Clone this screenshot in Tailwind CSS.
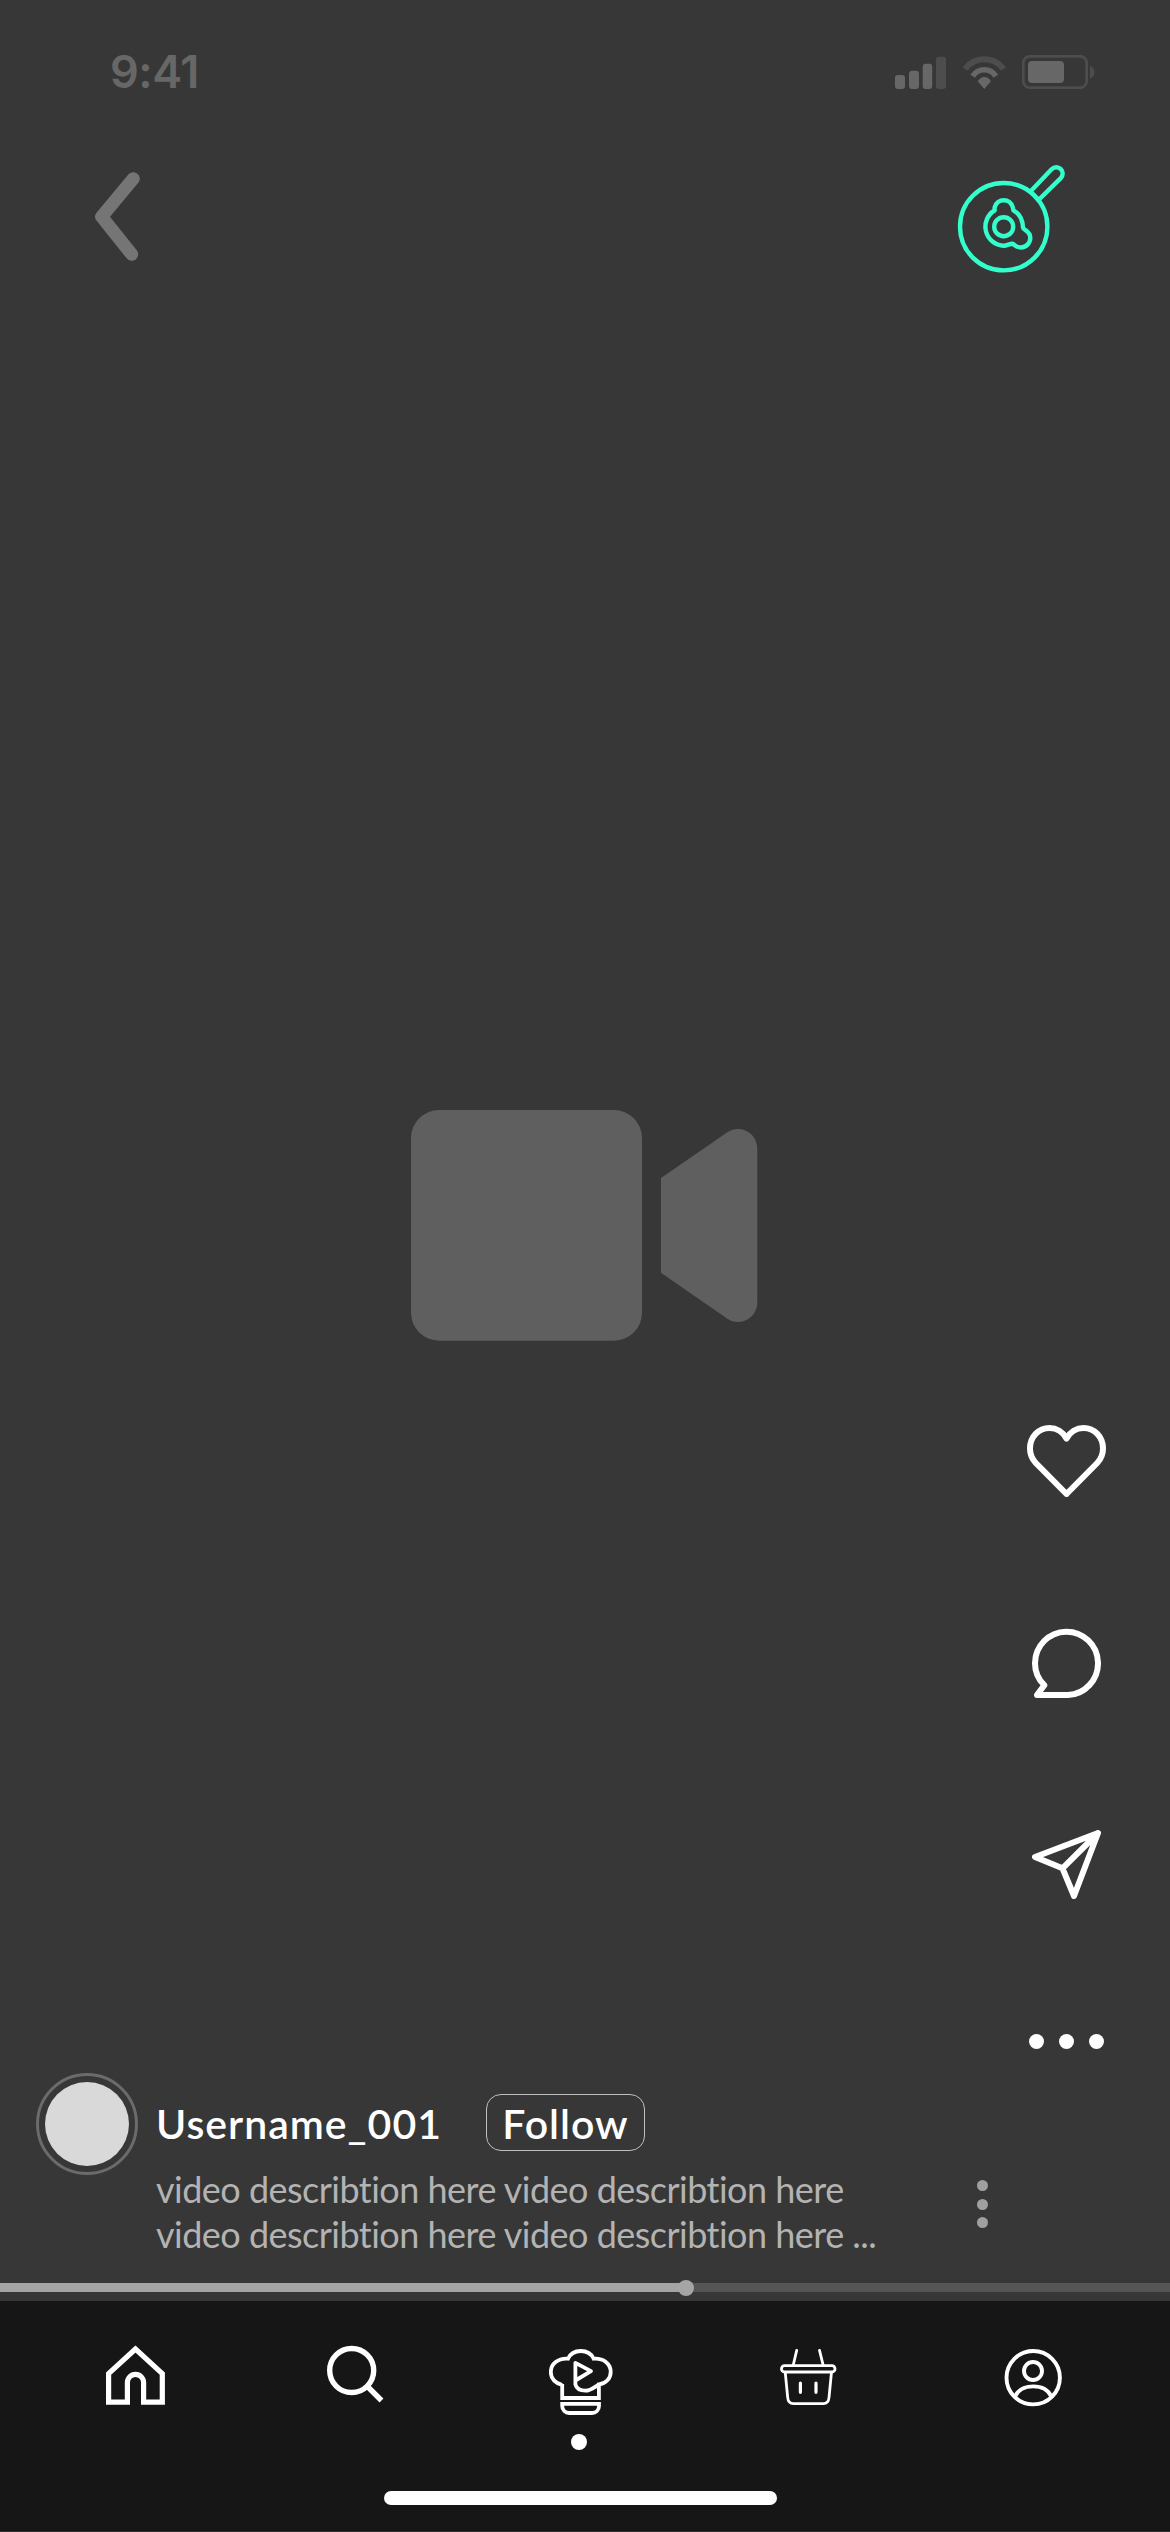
<!DOCTYPE html>
<html lang="en">

<head>
    <meta charset="UTF-8">
    <meta name="viewport" content="width=device-width, initial-scale=1.0">
    <script src="https://cdn.jsdelivr.net/npm/@tailwindcss/browser@4"></script>
    <title>Video</title>
</head>

<body class="bg-[#373737]">
    <div class="w-[1170px] h-[2532px] flex flex-col overflow-hidden bg-[#373737] font-['Lato',sans-serif] text-white">

        <!-- Status bar -->
        <div class="h-[145px] pt-[55px] pl-[110px] pr-[74px] flex justify-between items-start">
            <span class="h-[35px] leading-[34px] text-[45px] font-semibold font-['Inter',sans-serif] tracking-[-0.5px] text-[#676767]">9:41</span>
            <svg class="w-[201px] h-[35px]" viewBox="0 0 201 35" fill="none">
                <g fill="#676767">
                    <rect y="20" width="10" height="14" rx="3" />
                    <rect x="14" y="15.7" width="10" height="18.3" rx="3" />
                    <rect x="27.7" y="8.7" width="9.5" height="25.3" rx="3" />
                    <path d="M82.7 26.3C86 20.5 92.6 20.5 96 26.3L89.3 34z" />
                    <rect x="133" y="6" width="36" height="22" rx="4" />
                </g>
                <rect x="41" y="1.7" width="10" height="32.3" rx="3" fill="#4d4d4d" />
                <path d="M70 14A24 24 0 0 1 108.6 14" stroke="#4d4d4d" stroke-width="6" />
                <path d="M77.8 21.2A13.5 13.5 0 0 1 100.8 21.2" stroke="#676767" stroke-width="5.7" />
                <rect x="128.3" y="1.3" width="63.4" height="31.4" rx="6.5" stroke="#4d4d4d" stroke-width="2.7" />
                <path d="M195 11C201 13 201 21.5 195 23.5z" fill="#4d4d4d" />
            </svg>
        </div>

        <!-- Back button and pan -->
        <header class="h-[145px] pl-[94px] pr-[98px] flex justify-between items-start">
            <button class="mt-[27px]">
                <svg class="w-[48px] h-[90px]" viewBox="0 0 48 90" fill="none" stroke="#757575" stroke-width="13"
                    stroke-linecap="round" stroke-linejoin="round">
                    <path d="M39.3 6.7L7.7 44.7L37.7 82.3" />
                </svg>
            </button>
            <button class="mt-[15px]">
                <svg class="w-[115px] h-[115px]" viewBox="0 0 115 115" fill="none" stroke="#33ffcc" stroke-width="4.4"
                    stroke-linejoin="round">
                    <circle cx="46.7" cy="66.7" r="43.7" />
                    <circle cx="46.7" cy="66.7" r="9.5" />
                    <path d="M73.5 31.5L94.8 9.1A6.3 6.3 0 0 1 103.8 18.1L81.5 40M73.5 31.5L81.5 40" />
                    <path
                        d="M37.5 50.5A19 19 0 0 0 46.7 85.7C50 85.7 52.7 83.6 55.5 83.7C57 83.9 58.5 87.5 64 87.5A9.6 9.6 0 0 0 73.3 78C73.3 70.5 66.3 70.5 66 67.5C65.7 60 62 53.5 56.5 50.3C55.8 49.9 56.6 49.2 55.7 47A9.3 9.3 0 0 0 37.8 47C37 49 38.2 49.9 37.5 50.5z" />
                </svg>
            </button>
        </header>

        <!-- Video placeholder -->
        <main class="h-[1135px] pt-[820px] pl-[411px]">
            <svg class="w-[347px] h-[231px]" viewBox="0 0 347 231" fill="#5f5f5f">
                <rect width="231" height="230.7" rx="28" />
                <path
                    d="M250 68L316 22.5C329 13.5 346.3 23 346.3 38.5V192.5C346.3 208 329 217.5 316 208.5L250 162.7z" />
            </svg>
        </main>

        <!-- Actions -->
        <aside class="h-[648px] w-[79px] ml-[1027px] flex flex-col items-center">
            <button>
                <svg class="block w-[79px] h-[72px]" viewBox="0 0 79 72" fill="none" stroke="white" stroke-width="6"
                    stroke-linejoin="round">
                    <path
                        d="M39.5 13.5C36 7 29.5 3 22.5 3C11.5 3 3 12 3 23.5C3 29 5 34 8.8 38L39.5 69L70.2 38C74 34 76 29 76 23.5C76 12 67.5 3 56.5 3C49.5 3 43 7 39.5 13.5z" />
                </svg>
            </button>
            <button class="mt-[131px]">
                <svg class="block w-[69px] h-[70px]" viewBox="0 0 69 70" fill="none" stroke="white" stroke-width="6"
                    stroke-linejoin="round">
                    <path d="M36 67H5L12.3 57.2C6.5 51.5 3 44 3 35.2A31.5 31.7 0 1 1 36 67z" />
                </svg>
            </button>
            <button class="mt-[132px]">
                <svg class="block w-[69px] h-[69px]" viewBox="0 0 69 69" fill="none" stroke="white" stroke-width="6"
                    stroke-linejoin="round">
                    <path d="M66 3L3 27L30.5 38.3L42 66L66 3L30.5 38.3" />
                </svg>
            </button>
            <button class="mt-[135px] flex gap-[15px]">
                <span class="size-[15px] rounded-full bg-white"></span>
                <span class="size-[15px] rounded-full bg-white"></span>
                <span class="size-[15px] rounded-full bg-white"></span>
            </button>
        </aside>

        <!-- Video info -->
        <section class="h-[210px] pl-[36px] flex items-start">
            <div class="size-[102px] shrink-0 p-[6px] rounded-full border-3 border-[#6b6b6b]">
                <div class="size-full rounded-full bg-[#d9d9d9]"></div>
            </div>
            <div class="w-[740px] ml-[18px] pt-[21px]">
                <div class="flex items-center h-[57px]">
                    <span class="w-[330px] pt-[2px] text-[41px] font-semibold tracking-[1px] whitespace-nowrap">Username_001</span>
                    <button
                        class="w-[159px] h-[57px] pt-[2px] rounded-[15px] border border-[#c0c0c0] text-[41px] leading-none font-semibold tracking-[1px]">Follow</button>
                </div>
                <p class="mt-[16px] text-[36px] leading-[45px] tracking-[-0.52px] text-[#b3b3b3] whitespace-nowrap">
                    video describtion here video describtion here<br>
                    video describtion here video describtion here ...
                </p>
            </div>
            <button class="ml-[81px] mt-[107px] flex flex-col gap-[7.5px]">
                <span class="size-[11px] rounded-full bg-[#a0a0a0]"></span>
                <span class="size-[11px] rounded-full bg-[#a0a0a0]"></span>
                <span class="size-[11px] rounded-full bg-[#a0a0a0]"></span>
            </button>
        </section>

        <!-- Progress -->
        <div class="h-[9px] mb-[9px] bg-[#555555]">
            <div class="relative h-full bg-[#a5a5a5]" style="width: 58.66%">
                <span class="absolute -right-2 -top-[3px] size-[16px] rounded-full bg-[#a5a5a5]"></span>
            </div>
        </div>

        <!-- Bottom navigation -->
        <nav class="h-[230px] pt-[44px] bg-[#161616]">
            <div class="flex items-start gap-[167px] pl-[106px] h-[146px]">
                <svg class="-mr-[5px] w-[59px] h-[60px]" viewBox="0 0 59 60" fill="none" stroke="white"
                    stroke-width="5.2">
                    <path
                        d="M29.5 4L2.6 28.7V57.2H21.4V37.5A8 8 0 0 1 37.6 37.5V57.2H56.3V28.7z" />
                </svg>
                <svg class="w-[55px] h-[59px] overflow-visible" viewBox="0 0 55 59" fill="none" stroke="white"
                    stroke-width="5.4">
                    <circle cx="24.7" cy="25.5" r="22" />
                    <path d="M40 41L54.5 55.5" />
                </svg>
                <div class="mt-[4px] w-[64px] flex flex-col items-center">
                    <svg class="w-[64px] h-[66px]" viewBox="0 0 64 66" fill="none" stroke="white" stroke-width="3.8">
                        <path
                            d="M13.2 35V49H49.9V35.5C57 34.5 61.7 29.5 61.7 23C61.7 14.5 54.5 9 44.7 9.7C42.5 5 37.5 2 31.8 2C26.2 2 21.2 5 19 9.7C9 9 1.8 15 1.8 23C1.8 29.5 6.5 34 13.2 36" />
                        <path d="M13.2 54.8H50V57C50 61 47 64 43 64H20.2C16.2 64 13.2 61 13.2 57z" />
                        <path d="M26.4 32V13.8L42 22.2L26.4 31.5V35.5C27.5 39.5 31.5 41.7 36.5 41.7C42 41.7 45 38.3 50 35.5"
                            stroke-linejoin="round" />
                    </svg>
                    <span class="mt-[19px] mr-[4px] size-[16px] rounded-full bg-white"></span>
                </div>
                <svg class="mt-[4px] w-[57px] h-[56px]" viewBox="0 0 57 56" fill="none" stroke="white"
                    stroke-width="2.8" stroke-linecap="round">
                    <rect x="1.5" y="16.7" width="53.5" height="6.3" rx="3" />
                    <path d="M16.7 1.4L13.4 15.5M39.5 1.4L43 15.5" />
                    <path
                        d="M5.3 24L7.7 48.5C8 52.5 10 54.6 13.5 54.6H43.2C46.7 54.6 48.7 52.5 49 48.5L51.4 24" />
                    <path d="M20.4 34V43.3M36 34V43.3" stroke-width="3.2" />
                </svg>
                <svg class="mt-[4px] w-[58px] h-[58px]" viewBox="0 0 58 58" fill="none" stroke="white"
                    stroke-width="3.9">
                    <circle cx="29.2" cy="28.7" r="26.7" />
                    <circle cx="29" cy="22" r="9" />
                    <path d="M11 47.5C14 41 21 37.4 29.2 37.4C37.4 37.4 44.3 41 47.3 47.5" />
                </svg>
            </div>
            <!-- Home indicator -->
            <div class="ml-[384px] w-[393px] h-[14px] rounded-full bg-white"></div>
        </nav>
        <div class="h-px bg-[#303030]"></div>
    </div>
</body>

</html>
